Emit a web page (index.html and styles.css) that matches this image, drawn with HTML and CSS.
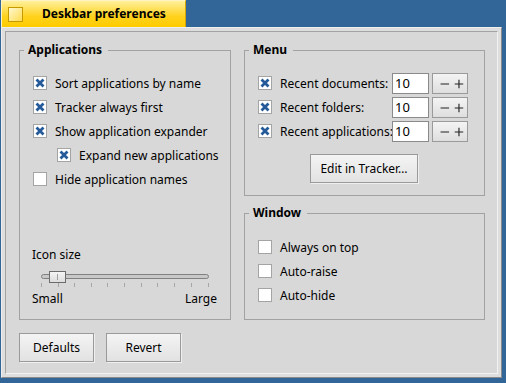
FILE: index.html
```html
<!DOCTYPE html>
<html lang="en">
<head>
    <meta charset="UTF-8">
    <title>Deskbar preferences</title>
    <link rel="stylesheet" href="styles.css">
</head>
<body>

    <div class="window">
        <!-- Window tab -->
        <div class="tab">
            <span class="close-box"></span>
            <span class="tab-title">Deskbar preferences</span>
        </div>

        <div class="frame">
            <div class="panel">
                <div class="columns">

                    <!-- Applications -->
                    <fieldset class="group group-apps">
                        <legend>Applications</legend>
                        <div class="group-body">
                            <label class="check-row"><span class="check"><svg viewBox="0 0 12 12"><path d="M2.5 2.5 9.5 9.5M9.5 2.5 2.5 9.5"/></svg></span>Sort applications by name</label>
                            <label class="check-row"><span class="check"><svg viewBox="0 0 12 12"><path d="M2.5 2.5 9.5 9.5M9.5 2.5 2.5 9.5"/></svg></span>Tracker always first</label>
                            <label class="check-row"><span class="check"><svg viewBox="0 0 12 12"><path d="M2.5 2.5 9.5 9.5M9.5 2.5 2.5 9.5"/></svg></span>Show application expander</label>
                            <label class="check-row indent"><span class="check"><svg viewBox="0 0 12 12"><path d="M2.5 2.5 9.5 9.5M9.5 2.5 2.5 9.5"/></svg></span>Expand new applications</label>
                            <label class="check-row"><span class="check"></span>Hide application names</label>

                            <div class="icon-size">
                                <div class="slider-label">Icon size</div>
                                <svg class="slider" width="184" height="21" viewBox="0 0 184 21">
                                    <defs>
                                        <linearGradient id="knob" x1="0" y1="0" x2="0" y2="1">
                                            <stop offset="0" stop-color="#f6f6f6"/>
                                            <stop offset="1" stop-color="#dcdcdc"/>
                                        </linearGradient>
                                    </defs>
                                    <rect x="9.5" y="7.5" width="167" height="4" rx="2" fill="#c8c8c8" stroke="#808080"/>
                                    <g stroke="#a6a6a6">
                                        <path d="M9.5 16v4M26.5 16v4M42.5 16v4M59.5 16v4M75.5 16v4M92.5 16v4M109.5 16v4M125.5 16v4M142.5 16v4M159.5 16v4M176.5 16v4"/>
                                    </g>
                                    <rect x="17.5" y="4.5" width="16" height="11" fill="url(#knob)" stroke="#6c6c6c"/>
                                    <path d="M25.5 7v6" stroke="#a0a0a0"/>
                                </svg>
                                <div class="slider-ends"><span>Small</span><span>Large</span></div>
                            </div>
                        </div>
                    </fieldset>

                    <div class="side">
                        <!-- Menu -->
                        <fieldset class="group group-menu">
                            <legend>Menu</legend>
                            <div class="group-body">
                                <div class="recent-row">
                                    <span class="check"><svg viewBox="0 0 12 12"><path d="M2.5 2.5 9.5 9.5M9.5 2.5 2.5 9.5"/></svg></span>
                                    <span class="recent-label">Recent documents:</span>
                                    <span class="field">10</span>
                                    <span class="stepper"><svg viewBox="0 0 36 20"><path d="M8 10.5h9M23 10.5h9M27.5 6v9"/></svg></span>
                                </div>
                                <div class="recent-row">
                                    <span class="check"><svg viewBox="0 0 12 12"><path d="M2.5 2.5 9.5 9.5M9.5 2.5 2.5 9.5"/></svg></span>
                                    <span class="recent-label">Recent folders:</span>
                                    <span class="field">10</span>
                                    <span class="stepper"><svg viewBox="0 0 36 20"><path d="M8 10.5h9M23 10.5h9M27.5 6v9"/></svg></span>
                                </div>
                                <div class="recent-row">
                                    <span class="check"><svg viewBox="0 0 12 12"><path d="M2.5 2.5 9.5 9.5M9.5 2.5 2.5 9.5"/></svg></span>
                                    <span class="recent-label">Recent applications:</span>
                                    <span class="field">10</span>
                                    <span class="stepper"><svg viewBox="0 0 36 20"><path d="M8 10.5h9M23 10.5h9M27.5 6v9"/></svg></span>
                                </div>
                                <div class="edit-row">
                                    <button class="btn btn-edit">Edit in Tracker…</button>
                                </div>
                            </div>
                        </fieldset>

                        <!-- Window -->
                        <fieldset class="group group-window">
                            <legend>Window</legend>
                            <div class="group-body">
                                <label class="check-row"><span class="check"></span>Always on top</label>
                                <label class="check-row"><span class="check"></span>Auto-raise</label>
                                <label class="check-row"><span class="check"></span>Auto-hide</label>
                            </div>
                        </fieldset>
                    </div>
                </div>

                <div class="actions">
                    <button class="btn">Defaults</button>
                    <button class="btn">Revert</button>
                </div>
            </div>
        </div>
    </div>

</body>
</html>
```

FILE: styles.css
```css
* {
    margin: 0;
    padding: 0;
    box-sizing: border-box;
}

body {
    font-family: "Noto Sans", "DejaVu Sans", sans-serif;
    font-size: 12px;
    color: #000;
    background-color: #336698;
    height: 100vh;
    overflow: hidden;
}

.window {
    margin-left: 1px;
    width: 501px;
}

/* Yellow window tab */
.tab {
    width: 185px;
    height: 27px;
    display: flex;
    align-items: center;
    padding-left: 6px;
    background: linear-gradient(#fff09c, #ffd21c 60%, #ffcb00);
    border-top: 1px solid #fff4c0;
    border-left: 1px solid #fff4c0;
    border-right: 1px solid #d6a600;
}

.close-box {
    width: 15px;
    height: 15px;
    margin-right: 19px;
    border: 1px solid #c49a00;
    background: linear-gradient(135deg, #fff8d0, #ffdc50);
}

.tab-title {
    font-weight: bold;
    line-height: 16px;
}

/* Window frame */
.frame {
    height: 351px;
    padding: 3px;
    background-color: #dedede;
    border: 1px solid;
    border-color: #eeeeee #8a8a8a #8a8a8a #eeeeee;
}

.panel {
    height: 100%;
    padding: 10px 0 0 13px;
    background-color: #d8d8d8;
    border: 1px solid;
    border-color: #a2a2a2 #f2f2f2 #f2f2f2 #a2a2a2;
}

.columns {
    display: grid;
    grid-template-columns: 212px 241px;
    column-gap: 13px;
}

.side {
    display: flex;
    flex-direction: column;
    gap: 9px;
}

/* Group boxes */
.group {
    margin: 0;
    min-width: 0;
    border: 1px solid #a2a2a2;
    display: flex;
    flex-direction: column;
}

.group legend {
    margin-left: 4px;
    padding: 0 6px 0 4px;
    font-weight: bold;
    line-height: 16px;
}

.group-body {
    flex: 1;
    display: flex;
    flex-direction: column;
    padding: 13px 13px 12px 12px;
}

.group-window .group-body {
    padding-top: 14px;
}

/* Check boxes */
.check-row {
    height: 24px;
    display: flex;
    align-items: center;
    white-space: nowrap;
}

.check-row.indent {
    padding-left: 24px;
}

.check {
    width: 14px;
    height: 14px;
    flex: none;
    margin: 0 8px 0 1px;
    background-color: #fff;
    border: 1px solid #a4a4a4;
    display: flex;
}

.check svg {
    width: 12px;
    height: 12px;
    fill: none;
    stroke: #24599a;
    stroke-width: 2.8;
}

/* Icon size slider */
.icon-size {
    margin-top: auto;
}

.slider-label,
.slider-ends {
    line-height: 16px;
}

.slider {
    display: block;
    margin: 4px 0 3px;
}

.slider-ends {
    display: flex;
    justify-content: space-between;
}

/* Recent items */
.recent-row {
    height: 24px;
    display: flex;
    align-items: center;
}

.recent-label {
    width: 112px;
    white-space: nowrap;
}

.field {
    width: 37px;
    height: 21px;
    padding-left: 2px;
    line-height: 19px;
    font-size: 13px;
    background-color: #fff;
    border: 1px solid #8a8a8a;
}

.stepper {
    width: 36px;
    height: 21px;
    margin-left: 3px;
    display: flex;
    background: linear-gradient(#f4f4f4, #dedede);
    border: 1px solid #9a9a9a;
}

.stepper svg {
    width: 34px;
    height: 19px;
    fill: none;
    stroke: #222;
    stroke-width: 1.2;
}

.edit-row {
    display: flex;
    justify-content: center;
    margin-top: 11px;
}

/* Push buttons */
.btn {
    width: 75px;
    height: 29px;
    font-family: inherit;
    font-size: 12px;
    color: #000;
    background: linear-gradient(#f4f4f4, #e2e2e2);
    border: 1px solid #9a9a9a;
    box-shadow: 1px 1px 0 #efefef;
}

.btn-edit {
    width: 108px;
}

.actions {
    display: flex;
    gap: 12px;
    margin-top: 13px;
}
```
